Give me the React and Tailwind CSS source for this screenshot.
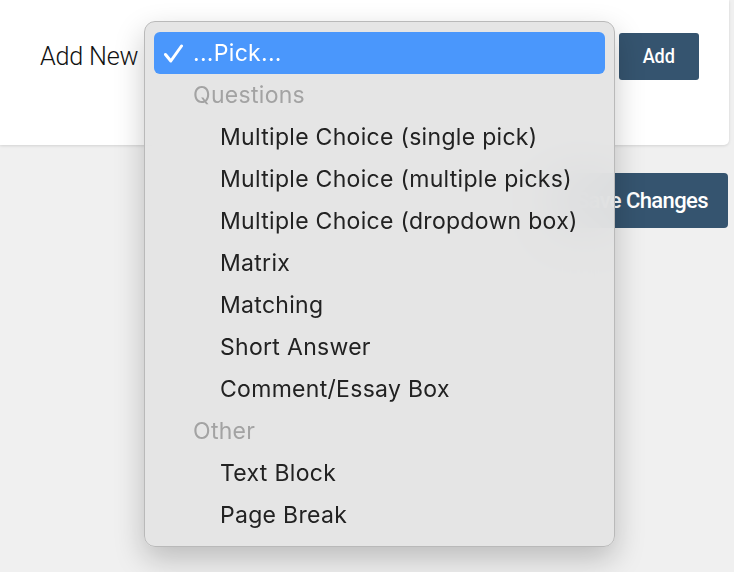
import React from "react";

const groups = [
  {
    label: "Questions",
    items: [
      "Multiple Choice (single pick)",
      "Multiple Choice (multiple picks)",
      "Multiple Choice (dropdown box)",
      "Matrix",
      "Matching",
      "Short Answer",
      "Comment/Essay Box",
    ],
  },
  { label: "Other", items: ["Text Block", "Page Break"] },
];

export default function App() {
  return (
    <div className="relative h-[572px] w-[734px] overflow-hidden bg-[#f0f0f0] font-['Roboto',sans-serif]">
      <div className="mr-[5px] flex h-[145px] items-start rounded-br-[5px] bg-white pl-[40px] pt-[33px] shadow-[0_1px_3px_rgba(0,0,0,0.12)]">
        <div className="flex h-[47px] w-[100px] items-center whitespace-nowrap text-[25.2px] font-light tracking-[-0.2px] text-[#111]">Add New</div>
        <div className="ml-[14px] h-[47px] w-[465px]" />
        <button className="flex h-[47px] w-[80px] items-center justify-center rounded-[3px] bg-[#35546f] text-white">
          <span className="inline-block scale-x-[0.86] text-[21px] font-medium">Add</span>
        </button>
      </div>
      <div className="mr-[6px] mt-[28px] flex justify-end">
        <button className="flex h-[55px] items-center rounded-[4px] bg-[#35546f] px-[20px] text-[22px] font-medium tracking-[-0.6px] text-white">
          Save Changes
        </button>
      </div>

      <div className="absolute left-[144px] top-[21px] w-[471px] rounded-[11px] border border-[#b9b9b9] bg-[#e4e4e4]/95 px-[9px] pt-[10px] pb-[10px] font-['Inter',sans-serif] text-[23px] tracking-[0.3px] text-[#222] shadow-[0_12px_30px_rgba(0,0,0,0.22)] backdrop-blur-xl">
        <div className="flex h-[42px] items-center rounded-[6px] bg-[#4a97fc] pl-[9px] pt-[1px] text-white">
          <svg width="21" height="19" viewBox="0 0 21 19" className="mr-[9px]">
            <path d="M2.5 10.5 L7.8 17 L18.5 2" fill="none" stroke="white" strokeWidth="3" strokeLinecap="round" strokeLinejoin="round" />
          </svg>
          <span>...Pick...</span>
        </div>
        {groups.map((g) => (
          <div key={g.label}>
            <div className="flex h-[42px] items-center pl-[39px] pt-[1px] text-[#a3a3a3]">{g.label}</div>
            {g.items.map((it) => (
              <div key={it} className="flex h-[42px] items-center pl-[66px] pt-[1px]">
                {it}
              </div>
            ))}
          </div>
        ))}
      </div>
    </div>
  );
}
